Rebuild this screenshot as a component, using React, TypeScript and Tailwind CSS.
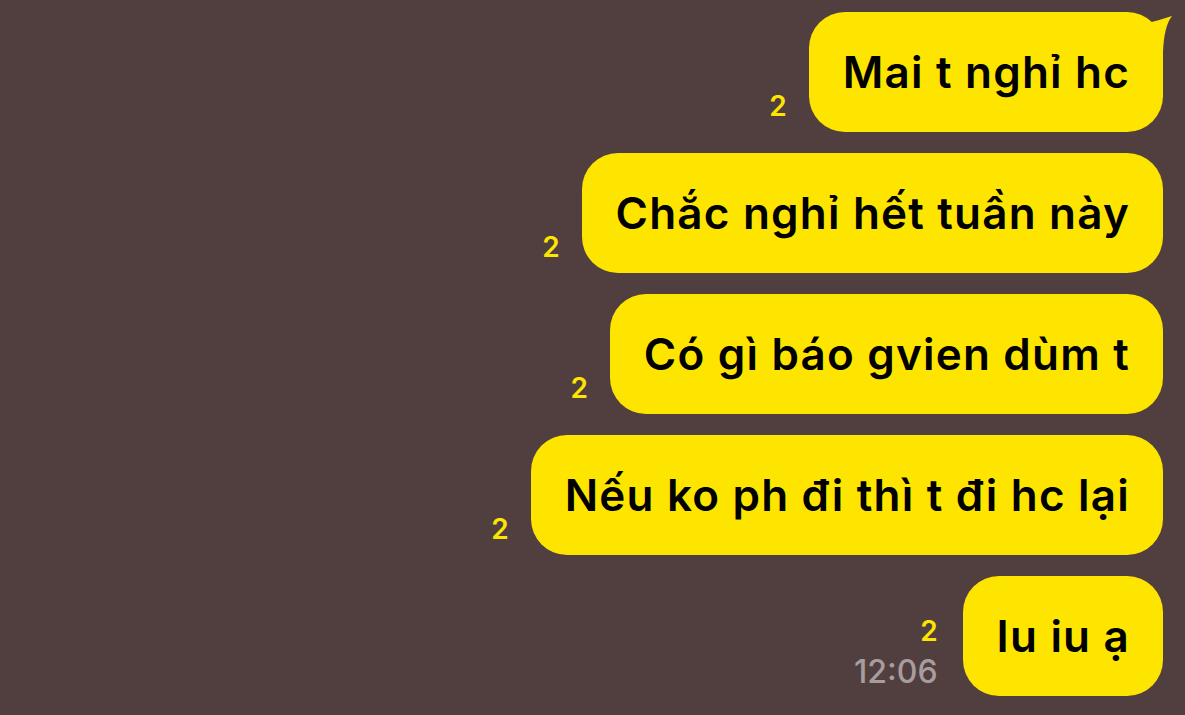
const messages = [
  { id: 1, text: "Mai t nghỉ hc", tail: true },
  { id: 2, text: "Chắc nghỉ hết tuần này" },
  { id: 3, text: "Có gì báo gvien dùm t" },
  { id: 4, text: "Nếu ko ph đi thì t đi hc lại" },
  { id: 5, text: "Iu iu ạ", time: "12:06" },
];

function Tail() {
  return (
    <svg
      className="absolute right-[-15px] top-0"
      width="40"
      height="45"
      viewBox="0 0 40 45"
    >
      <path d="M10,11 Q22,8 34,4 Q26,14 25,40 L10,40 Z" fill="#FEE500" />
    </svg>
  );
}

export default function App() {
  return (
    <div
      className="w-[1185px] h-[715px] bg-[#513f40] overflow-hidden"
      style={{ fontFamily: "Inter, 'Liberation Sans', sans-serif" }}
    >
      <div className="flex flex-col items-end gap-[21px] pt-[12px] pr-[22px]">
        {messages.map((m) => (
          <div
            key={m.id}
            className={`flex items-end ${m.time ? "gap-[25px]" : "gap-[22px]"}`}
          >
            <div
              className={`flex flex-col items-end ${m.time ? "pb-[8px]" : "pb-[12px]"}`}
            >
              <span className="text-[28px] leading-none font-semibold text-[#FEE500]">
                2
              </span>
              {m.time && (
                <span className="mt-[11px] text-[32px] leading-none font-medium text-[#a79d9e]">
                  {m.time}
                </span>
              )}
            </div>
            <div className="relative h-[120px] rounded-[36px] bg-[#FEE500] pl-[34px] pr-[33px] flex items-center">
              <span className="text-[44px] font-semibold text-black tracking-[1.2px] whitespace-nowrap">
                {m.text}
              </span>
              {m.tail && <Tail />}
            </div>
          </div>
        ))}
      </div>
    </div>
  );
}
